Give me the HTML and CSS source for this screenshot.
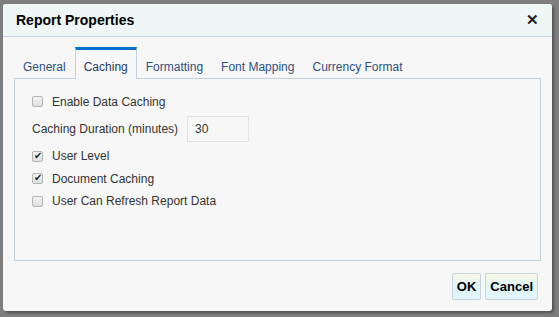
FILE: index.html
```html
<!DOCTYPE html>
<html lang="en">
<head>
    <meta charset="UTF-8">
    <title>Report Properties</title>
    <link rel="stylesheet" href="styles.css">
</head>
<body>
    <div class="dialog">
        <div class="dialog-header">
            <h1>Report Properties</h1>
            <button class="close">&#x2715;</button>
        </div>
        <div class="dialog-body">
            <div class="tabs">
                <span class="tab">General</span>
                <span class="tab active">Caching</span>
                <span class="tab">Formatting</span>
                <span class="tab">Font Mapping</span>
                <span class="tab">Currency Format</span>
            </div>
            <div class="panel">
                <label class="check first"><input type="checkbox"> Enable Data Caching</label>
                <div class="field">
                    <label for="duration">Caching Duration (minutes)</label>
                    <input type="text" id="duration" value="30">
                </div>
                <label class="check"><input type="checkbox" checked> User Level</label>
                <label class="check"><input type="checkbox" checked> Document Caching</label>
                <label class="check"><input type="checkbox"> User Can Refresh Report Data</label>
            </div>
        </div>
        <div class="dialog-footer">
            <button class="btn">OK</button>
            <button class="btn">Cancel</button>
        </div>
    </div>
</body>
</html>
```

FILE: styles.css
```css
body {
    margin: 0;
    padding: 4px 0 0 3px;
    background-color: #7e7e7e;
    font-family: "Liberation Sans", Arial, sans-serif;
    height: 317px;
    box-sizing: border-box;
    overflow: hidden;
}
.dialog {
    width: 549px;
    height: 307px;
    background-color: #f7f7f7;
    border-radius: 3px;
    box-shadow: 2px 2px 3px rgba(0, 0, 0, 0.35);
    display: flex;
    flex-direction: column;
}
.dialog > div {
    flex-shrink: 0;
}
.dialog-header {
    height: 32px;
    background-color: #eef6f6;
    border-bottom: 1px solid #c6d2df;
    border-radius: 3px 3px 0 0;
    display: flex;
    align-items: center;
    justify-content: space-between;
    padding: 0 13px;
}
.dialog-header h1 {
    margin: 0;
    font-size: 14px;
    font-weight: bold;
    color: #000;
}
.close {
    border: none;
    background: none;
    padding: 0;
    font-size: 15px;
    font-weight: bold;
    color: #222;
    cursor: pointer;
}
.dialog-body {
    padding: 10px 11px 0 11px;
}
.tabs {
    display: flex;
    height: 31px;
}
.tab {
    font-size: 12px;
    color: #2f4f7f;
    padding: 10px 8px 0 8px;
    border: 1px solid transparent;
    border-top: 3px solid transparent;
    border-bottom: none;
}
.tab.active {
    color: #283a5c;
    border-color: #c4cfdc;
    border-top-color: #0572ce;
    background-color: #f7f7f7;
    margin-bottom: -1px;
}
.panel {
    border: 1px solid #c4cfdc;
    height: 161px;
    padding: 10px 17px;
    font-size: 12px;
    color: #333;
}
.check {
    display: flex;
    align-items: center;
    height: 22.5px;
}
.check.first {
    height: 23px;
    margin-top: 1px;
}
.check input {
    appearance: none;
    width: 11px;
    height: 11px;
    margin: 0 9px 0 0;
    border: 1px solid #b4b4b4;
    border-radius: 2px;
    background: linear-gradient(#f4f4f4, #dedede);
    position: relative;
}
.check input:checked::after {
    content: "\2714";
    position: absolute;
    left: 1px;
    top: -2px;
    font-size: 10px;
    color: #222;
}
.field {
    display: flex;
    align-items: center;
    height: 32px;
}
.field input {
    margin-left: 9px;
    width: 62px;
    height: 26px;
    box-sizing: border-box;
    border: 1px solid #dde3e6;
    background: #f7f7f7;
    font-family: inherit;
    font-size: 12px;
    padding: 0 7px;
    color: #333;
}
.dialog-footer {
    display: flex;
    justify-content: flex-end;
    gap: 4px;
    padding: 12px 14px 0 0;
}
.btn {
    height: 27px;
    padding: 0 4px;
    border: 1px solid #c6d3dc;
    border-radius: 2px;
    background: linear-gradient(#fbf7e4, #e0f6f8 45%);
    font-family: inherit;
    font-size: 13px;
    font-weight: bold;
    color: #000;
}
```
